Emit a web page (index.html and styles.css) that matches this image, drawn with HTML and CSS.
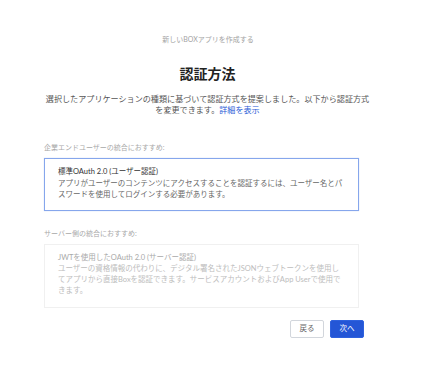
FILE: index.html
```html
<!DOCTYPE html>
<html lang="ja">
<head>
<meta charset="utf-8">
<link rel="stylesheet" href="styles.css">
</head>
<body>
<div class="page">
  <div class="crumb">新しいBOXアプリを作成する</div>
  <h1 class="title">認証方法</h1>
  <p class="intro">選択したアプリケーションの種類に基づいて認証方式を提案しました。以下から認証方式<br>を変更できます。<a class="link" href="#">詳細を表示</a></p>

  <div class="label label-first">企業エンドユーザーの統合におすすめ:</div>
  <div class="option option-selected">
    <div class="opt-title">標準OAuth 2.0 (ユーザー認証)</div>
    <div class="opt-desc">アプリがユーザーのコンテンツにアクセスすることを認証するには、ユーザー名とパ<br>スワードを使用してログインする必要があります。</div>
  </div>

  <div class="label label-second">サーバー側の統合におすすめ:</div>
  <div class="option option-disabled">
    <div class="opt-title">JWTを使用したOAuth 2.0 (サーバー認証)</div>
    <div class="opt-desc">ユーザーの資格情報の代わりに、デジタル署名されたJSONウェブトークンを使用し<br>てアプリから直接Boxを認証できます。サービスアカウントおよびApp Userで使用で<br>きます。</div>
  </div>

  <div class="actions">
    <button class="btn btn-back">戻る</button>
    <button class="btn btn-next">次へ</button>
  </div>
</div>
</body>
</html>
```

FILE: styles.css
```css
* { box-sizing: border-box; }
html, body { margin: 0; padding: 0; background: #ffffff; }
body {
  font-family: Lato, "Noto Sans CJK JP", "Noto Sans", sans-serif;
  color: #333;
}
.page {
  width: 327px;
  margin-left: 44px;
  padding-top: 34px;
  display: flex;
  flex-direction: column;
}
.crumb {
  text-align: center;
  font-size: 7px;
  line-height: 10px;
  color: #a3a3a3;
  padding-left: 1px;
}
.title {
  margin: 21px 0 0;
  text-align: center;
  font-size: 14px;
  line-height: 18px;
  font-weight: 700;
  color: #222;
}
.intro {
  margin: 11px 0 0;
  text-align: center;
  font-size: 8.1px;
  line-height: 10.5px;
  color: #555;
  white-space: nowrap;
}
.link { color: #2a5bd6; text-decoration: none; }
.label {
  font-size: 7px;
  line-height: 10px;
  color: #a8a8a8;
}
.label-first { margin-top: 27px; }
.label-second { margin-top: 17px; }
.option {
  width: 315px;
  margin-top: 6px;
  padding: 8px 10px 10px 13px;
  background: #fff;
  white-space: nowrap;
}
.option-selected {
  border: 1px solid #86a6ec;
  box-shadow: 0 0 1px rgba(80, 120, 220, 0.35);
}
.option-disabled {
  border: 1px solid #f0f0f0;
  padding-bottom: 11px;
}
.opt-title {
  font-size: 7.5px;
  line-height: 10px;
}
.opt-desc {
  margin-top: 2px;
  font-size: 7.5px;
  line-height: 10.5px;
}
.option-selected .opt-title { color: #333; }
.option-selected .opt-desc { color: #666; }
.option-disabled .opt-title { color: #a9a9a9; }
.option-disabled .opt-desc { color: #bdbdbd; margin-top: 1px; line-height: 10.8px; }
.actions {
  width: 320px;
  margin-top: 12px;
  display: flex;
  justify-content: flex-end;
  gap: 6px;
}
.btn {
  width: 34px;
  height: 18px;
  padding: 0;
  border-radius: 2px;
  font-family: Lato, "Noto Sans CJK JP", sans-serif;
  font-size: 7.5px;
  line-height: 16px;
  cursor: pointer;
}
.btn-back {
  background: #fff;
  border: 1px solid #d2d6dc;
  color: #666;
}
.btn-next {
  background: #2456d6;
  border: 1px solid #2f62de;
  color: #fff;
}
```
